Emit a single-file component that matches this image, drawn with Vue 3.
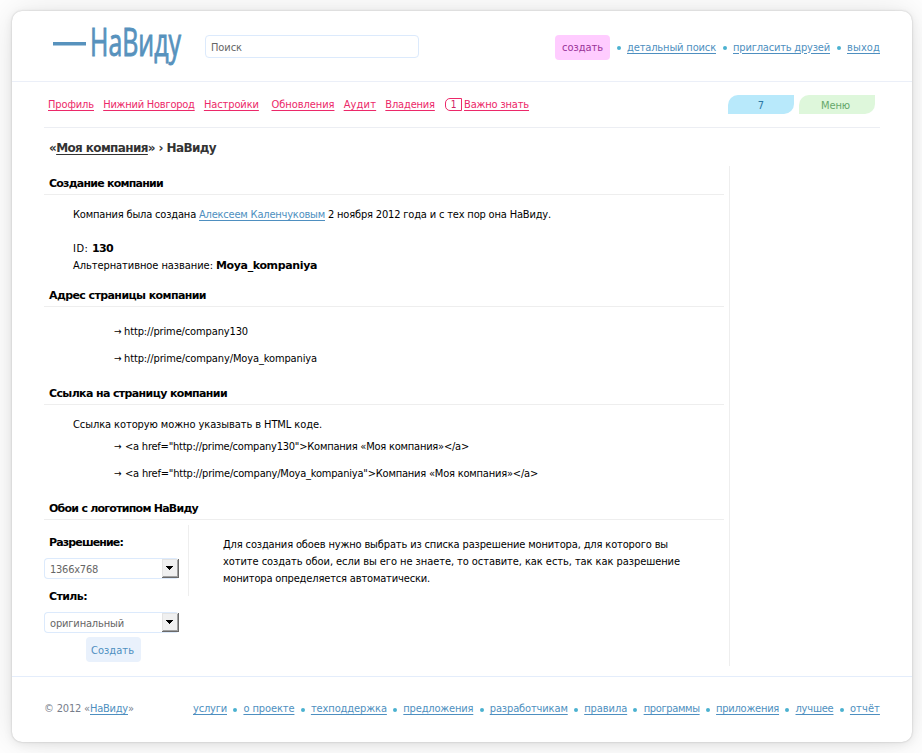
<script setup>
// Sets tracking so that a run of text fills the given width.
const vFit = {
  mounted(el, { value }) {
    if (!value) return
    const natural = el.getBoundingClientRect().width
    el.style.letterSpacing = `${(value - natural) / el.textContent.length}px`
  },
}

const topLinks = [
  { text: 'детальный поиск', w: 89 },
  { text: 'пригласить друзей', w: 97 },
  { text: 'выход', w: 33 },
]
const navLinks = [
  { text: 'Профиль', w: 46 },
  { text: 'Нижний Новгород', w: 91.5 },
  { text: 'Настройки', w: 55, wide: true },
  { text: 'Обновления', w: 63 },
  { text: 'Аудит', w: 32.5 },
  { text: 'Владения', w: 49.5 },
]
const footerLinks = [
  { text: 'услуги', w: 34 },
  { text: 'о проекте', w: 51 },
  { text: 'техподдержка', w: 76 },
  { text: 'предложения', w: 70 },
  { text: 'разработчикам', w: 78 },
  { text: 'правила', w: 43 },
  { text: 'программы', w: 56 },
  { text: 'приложения', w: 63 },
  { text: 'лучшее', w: 38 },
  { text: 'отчёт', w: 30 },
]
const addresses = [
  { text: 'http://prime/company130', w: 124 },
  { text: 'http://prime/company/Moya_kompaniya', w: 193 },
]
const codes = [
  { text: '<a href="http://prime/company130">Компания «Моя компания»</a>', w: 344 },
  { text: '<a href="http://prime/company/Moya_kompaniya">Компания «Моя компания»</a>', w: 413 },
]
const fields = [
  { label: 'Разрешение:', lw: 74, value: '1366x768', vw: 48 },
  { label: 'Стиль:', lw: 38, value: 'оригинальный', vw: 74 },
]
const help = [
  { text: 'Для создания обоев нужно выбрать из списка разрешение монитора, для которого вы', w: 445 },
  { text: 'хотите создать обои, если вы его не знаете, то оставите, как есть, так как разрешение', w: 457 },
  { text: 'монитора определяется автоматически.', w: 207 },
]
</script>

<template>
  <div class="page">
    <header class="header">
      <svg class="logo" width="130" height="42" viewBox="0 0 130 42">
        <rect x="1" y="17" width="33" height="3.5" fill="#5792bd" />
        <text transform="translate(38 31) scale(1 1.55)" textLength="91" lengthAdjust="spacingAndGlyphs">НаВиду</text>
      </svg>
      <div class="search"><span v-fit="31">Поиск</span></div>
      <div class="top-links">
        <a class="create"><span v-fit="41">создать</span></a>
        <template v-for="l in topLinks" :key="l.text">
          <i class="dot"></i>
          <a v-fit="l.w" class="link">{{ l.text }}</a>
        </template>
      </div>
    </header>

    <nav class="nav">
      <a v-for="l in navLinks" :key="l.text" v-fit="l.w" class="nav-link" :class="{ wide: l.wide }">{{ l.text }}</a>
      <span class="count">1</span>
      <a v-fit="65" class="nav-link">Важно знать</a>
      <div class="tabs">
        <span class="tab blue">7</span>
        <span class="tab green"><span v-fit="29">Меню</span></span>
      </div>
    </nav>

    <h1 class="title"><span v-fit="167">«<a>Моя компания</a>» › НаВиду</span></h1>

    <main class="content">
      <section class="about">
        <h2><span v-fit="114">Создание компании</span></h2>
        <div class="text">
          <p><span v-fit="126">Компания была создана </span><a v-fit="126" class="link">Алексеем Каленчуковым</a><span v-fit="226">&nbsp;2 ноября 2012 года и с тех пор она НаВиду.</span></p>
          <p class="gap"><span v-fit="19">ID: </span><b v-fit="21">130</b></p>
          <p><span v-fit="143">Альтернативное название: </span><b v-fit="101">Moya_kompaniya</b></p>
        </div>
      </section>
      <section class="address">
        <h2><span v-fit="157">Адрес страницы компании</span></h2>
        <ul class="list">
          <li v-for="a in addresses" :key="a.text"><i class="arrow">→</i><span v-fit="a.w">{{ a.text }}</span></li>
        </ul>
      </section>
      <section class="code">
        <h2><span v-fit="178">Ссылка на страницу компании</span></h2>
        <p class="note"><span v-fit="249">Ссылка которую можно указывать в HTML коде.</span></p>
        <ul class="list codes">
          <li v-for="c in codes" :key="c.text"><i class="arrow">→</i><span v-fit="c.w">{{ c.text }}</span></li>
        </ul>
      </section>
      <section>
        <h2><span v-fit="149">Обои с логотипом НаВиду</span></h2>
        <div class="wallpaper">
          <form class="form">
            <template v-for="f in fields" :key="f.label">
              <label><span v-fit="f.lw">{{ f.label }}</span></label>
              <div class="select">
                <span v-fit="f.vw">{{ f.value }}</span>
                <svg class="drop" width="17" height="19" viewBox="0 0 17 19" shape-rendering="crispEdges">
                  <rect width="17" height="19" fill="#696969" />
                  <rect width="16" height="18" fill="#e3e3e3" />
                  <rect x="1" y="1" width="15" height="17" fill="#a0a0a0" />
                  <rect x="1" y="1" width="14" height="16" fill="#f0f0f0" />
                  <path d="M4 7h7v1h-1v1h-1v1h-1v1h-1v-1h-1v-1h-1v-1h-1z" fill="#000" />
                </svg>
              </div>
            </template>
            <button type="button" class="submit"><span v-fit="43">Создать</span></button>
          </form>
          <div class="rule"></div>
          <div class="help">
            <p v-for="h in help" :key="h.w"><span v-fit="h.w">{{ h.text }}</span></p>
          </div>
        </div>
      </section>
    </main>

    <footer class="footer">
      <div class="copy"><span v-fit="46">© 2012 «</span><a v-fit="38" class="link">НаВиду</a><span>»</span></div>
      <div class="footer-links">
        <template v-for="(l, i) in footerLinks" :key="l.text">
          <i v-if="i" class="dot"></i>
          <a v-fit="l.w" class="link">{{ l.text }}</a>
        </template>
      </div>
    </footer>
  </div>
</template>

<style>
body {
  display: flow-root;
  min-height: 100vh;
  background: #fff;
}
</style>

<style scoped>
* {
  box-sizing: border-box;
}
.page {
  width: 900px;
  height: 731px;
  margin: 11px 0 11px 12px;
  background: #fff;
  border-radius: 10px;
  box-shadow: 0 0 2px rgba(0, 0, 0, 0.22), 0 2px 10px rgba(0, 0, 0, 0.08), 0 0 40px rgba(0, 0, 0, 0.11);
  font: 11px/17px "DejaVu Sans Condensed", "DejaVu Sans", sans-serif;
  font-stretch: condensed;
  color: #000;
  white-space: pre;
  display: flex;
  flex-direction: column;
}
p,
h1,
h2,
ul {
  margin: 0;
  padding: 0;
}
i {
  font-style: normal;
}
h1,
h2,
b,
label {
  font-family: "DejaVu Sans", sans-serif;
  font-stretch: normal;
  font-weight: bold;
}
.header {
  height: 71px;
  flex: none;
  border-bottom: 1px solid #ebeff8;
  padding: 0 32px 0 40px;
  display: flex;
  align-items: flex-start;
}
.logo {
  margin-top: 14px;
  overflow: visible;
}
.logo text {
  font: 400 25px "Open Sans", sans-serif;
  fill: #5792bd;
  stroke: #5792bd;
  stroke-width: 0.6px;
}
.search {
  width: 214px;
  height: 23px;
  margin: 24px 0 0 23px;
  padding: 3px 5px;
  border: 1px solid #dceafc;
  border-radius: 4px;
  color: #666;
}
.top-links {
  margin: 24px 0 0 auto;
  display: flex;
  align-items: center;
}
.top-links .link {
  margin-bottom: 1px;
}
.create {
  width: 55px;
  height: 25px;
  border-radius: 4px;
  background: #fcf;
  color: #939;
  line-height: 25px;
  padding-left: 7px;
}
.dot {
  width: 4px;
  height: 4px;
  margin: 1px 6px 0 7px;
  border-radius: 50%;
  background: #4bb1d0;
}
.link {
  color: #4e8fc0;
  text-decoration: underline;
  text-underline-offset: 2px;
  text-decoration-thickness: 1px;
}
.nav {
  height: 46px;
  flex: none;
  margin: 0 32px;
  padding-left: 4px;
  border-bottom: 1px solid #eceef3;
  display: flex;
  align-items: center;
}
.nav-link {
  color: #ec2869;
  margin-right: 9.2px;
  text-decoration: underline;
  text-underline-offset: 2px;
}
.nav-link.wide {
  margin-right: 12.6px;
}
.count {
  width: 17px;
  height: 13px;
  margin: 0 2px 0 1px;
  border: 1px solid #ec2869;
  border-radius: 5px 0 0 5px;
  color: #d02466;
  font-size: 10px;
  line-height: 12px;
  text-align: center;
}
.tabs {
  display: flex;
  gap: 5px;
  margin: 0 5px 0 auto;
}
.tab {
  height: 19px;
  border-radius: 10px 0 10px 0;
  line-height: 21px;
  text-align: center;
}
.blue {
  width: 66px;
  background: #b8e9fb;
  color: #2c77a5;
}
.green {
  width: 76px;
  padding-right: 3px;
  background: #def7db;
  color: #66a86b;
}
.title {
  height: 38px;
  flex: none;
  padding: 12px 0 0 37px;
  font-size: 12px;
  line-height: 17px;
  color: #333;
}
.title a {
  text-decoration: underline;
  text-underline-offset: 2px;
}
.content {
  width: 686px;
  height: 500px;
  flex: none;
  margin-left: 32px;
  padding-right: 5px;
  border-right: 1px solid #eee;
}
h2 {
  height: 29px;
  padding: 9px 0 0 5px;
  border-bottom: 1px solid #eee;
  font-size: 11px;
  line-height: 17px;
}
.about {
  height: 112px;
}
.text {
  padding: 11px 0 0 29px;
}
.gap {
  margin-top: 17px;
}
.address {
  height: 98px;
}
.list {
  list-style: none;
  padding: 16px 0 0 70px;
}
.list li {
  display: flex;
  height: 27px;
}
.arrow {
  width: 10px;
  font-size: 10px;
  line-height: 18px;
}
.code {
  height: 115px;
}
.note {
  padding: 11px 0 0 29px;
}
.codes {
  padding-top: 5px;
}
.codes .arrow {
  width: 11px;
}
.wallpaper {
  display: flex;
}
.form {
  width: 144px;
}
.form label {
  display: block;
  height: 38px;
  padding: 14px 0 0 5px;
}
.select {
  width: 135px;
  height: 21px;
  border: 1px solid #dceafc;
  border-right: 0;
  border-radius: 4px;
  padding-left: 5px;
  display: flex;
  align-items: center;
  justify-content: space-between;
  color: #666;
}
.form .select + label {
  height: 33px;
  padding-top: 9px;
}
.select > span {
  padding-top: 2px;
}
.submit {
  display: block;
  width: 55px;
  height: 25px;
  margin: 4px 0 0 42px;
  padding: 1px 0 0 5px;
  border: 0;
  border-radius: 4px;
  background: #e9f1fc;
  color: #4e8fc0;
  font: inherit;
  text-align: left;
}
.rule {
  width: 1px;
  height: 71px;
  margin-top: 5px;
  background: #eee;
}
.help {
  padding: 16px 0 0 34px;
}
.footer {
  flex: none;
  height: 66px;
  margin-top: 10px;
  padding: 0 32px 2px;
  border-top: 1px solid #e4edfb;
  display: flex;
  align-items: center;
  justify-content: space-between;
}
.copy {
  color: #777d8b;
}
.footer-links {
  width: 687px;
  display: flex;
  align-items: center;
  justify-content: space-between;
}
.footer-links .dot {
  margin: 2px 6px 0 6px;
}
</style>
